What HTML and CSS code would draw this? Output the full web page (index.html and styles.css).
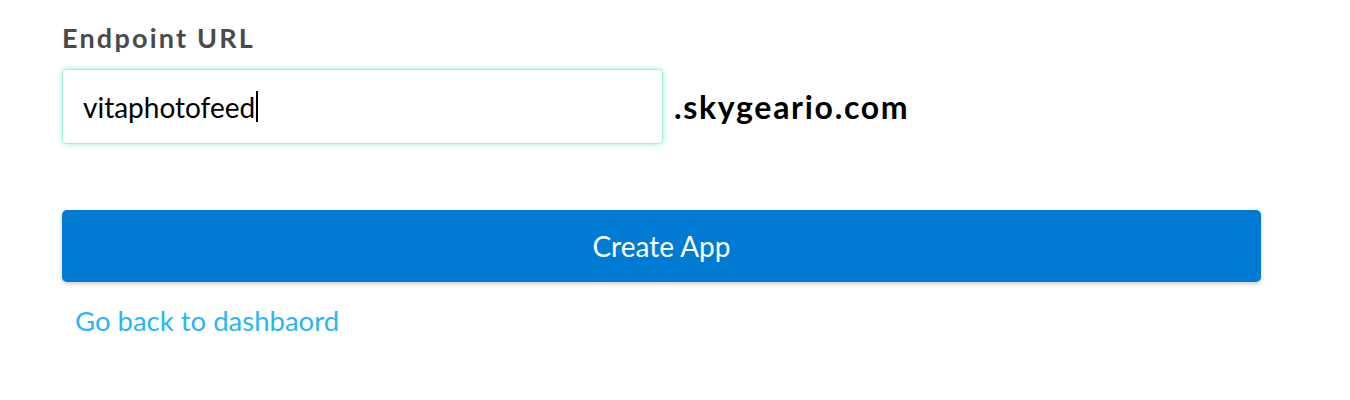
FILE: index.html
```html
<!DOCTYPE html>
<html>
<head>
<meta charset="utf-8">
<link rel="stylesheet" href="styles.css">
</head>
<body>
<div class="form">
  <label class="label">Endpoint URL</label>
  <div class="endpoint-row">
    <div class="input"><span class="value">vitaphotofeed</span><span class="caret"></span></div>
    <span class="suffix">.skygeario.com</span>
  </div>
  <button class="btn">Create App</button>
  <a class="back" href="#">Go back to dashbaord</a>
</div>
</body>
</html>
```
FILE: styles.css
```css
html, body {
  margin: 0;
  padding: 0;
  background: #fff;
}
body {
  font-family: Lato, "Open Sans", sans-serif;
}
.form {
  padding: 22px 0 0 62px;
  width: 1200px;
  display: flex;
  flex-direction: column;
}
.label {
  font-size: 27px;
  font-weight: 700;
  color: #4a4a4a;
  letter-spacing: 2.2px;
  line-height: 32px;
}
.endpoint-row {
  display: flex;
  align-items: center;
  margin-top: 15px;
}
.input {
  width: 601px;
  height: 75px;
  box-sizing: border-box;
  border: 1px solid #9ff0de;
  box-shadow: 0 0 5px rgba(110, 232, 205, 0.8);
  border-radius: 5px;
  display: flex;
  align-items: center;
  padding-left: 20px;
  font-size: 28px;
  color: #000;
}
.caret {
  display: inline-block;
  width: 2px;
  height: 31px;
  background: #000;
  margin-left: 1px;
}
.suffix {
  margin-left: 11px;
  font-size: 32px;
  font-weight: 700;
  color: #000;
  letter-spacing: 1.7px;
}
.btn {
  margin-top: 66px;
  width: 1199px;
  height: 72px;
  border: none;
  border-radius: 5px;
  background: #007bd4;
  color: #fff;
  font-family: Lato, sans-serif;
  font-size: 28px;
  box-shadow: 0 2px 4px rgba(0,0,0,0.2);
}
.back {
  margin-top: 21px;
  margin-left: 13px;
  font-size: 27.5px;
  color: #2bb5f3;
  text-decoration: none;
  line-height: 36px;
}
```
